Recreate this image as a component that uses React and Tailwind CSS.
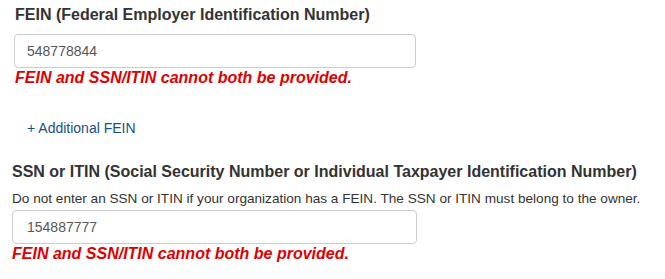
import React from 'react';

const ErrorText = ({ className = '' }) => (
    <p className={`font-bold italic text-[16px] leading-[18px] text-[#e00000] ${className}`}>
        FEIN and SSN/ITIN cannot both be provided.
    </p>
);

const App = () => {
    return (
        <div className="w-[665px] h-[279px] bg-white overflow-hidden font-['Liberation_Sans',Arial,sans-serif] text-[#333]">
            {/* FEIN */}
            <div className="pl-[14px] pt-[5px]">
                <label className="block font-bold text-[16px] leading-[20px] pl-px mb-[9px]">
                    FEIN (Federal Employer Identification Number)
                </label>
                <input
                    type="text"
                    defaultValue="548778844"
                    className="block w-[402px] h-[34px] px-[12px] border border-[#ccc] rounded-[4px] text-[14px] text-[#555] outline-none"
                />
                <ErrorText className="mt-[1px] pl-px" />
                <button className="mt-[31px] ml-[13px] text-[14px] text-[#1a4f8b] leading-[20px]">+ Additional FEIN</button>
            </div>

            {/* SSN or ITIN */}
            <div className="pl-[12px] pt-[22px]">
                <label className="block font-bold text-[16px] leading-[20px]">
                    SSN or ITIN (Social Security Number or Individual Taxpayer Identification Number)
                </label>
                <p className="text-[13.6px] leading-[18px] mt-[8px] mb-[2px]">
                    Do not enter an SSN or ITIN if your organization has a FEIN. The SSN or ITIN must belong to the owner.
                </p>
                <input
                    type="text"
                    defaultValue="154887777"
                    className="block w-[405px] h-[34px] px-[14px] border border-[#ccc] rounded-[4px] text-[14px] text-[#555] outline-none"
                />
                <ErrorText className="mt-[1px]" />
            </div>
        </div>
    );
};

export default App;
